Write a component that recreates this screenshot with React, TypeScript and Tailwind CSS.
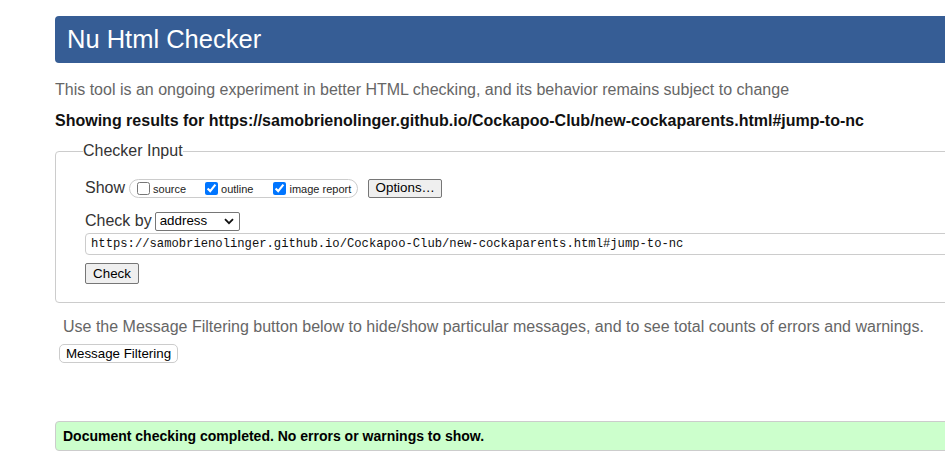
import React from "react";

function Check({ checked }: { checked: boolean }) {
  return (
    <input
      type="checkbox"
      defaultChecked={checked}
      className="m-0 h-[13px] w-[13px] shrink-0 accent-[#0075ff]"
    />
  );
}

export default function App() {
  const url =
    "https://samobrienolinger.github.io/Cockapoo-Club/new-cockaparents.html#jump-to-nc";
  return (
    <div className="h-[465px] w-[945px] overflow-hidden bg-white font-['Liberation_Sans',Arial,sans-serif] text-[#222]">
      <div className="ml-[55px] w-[1000px]">
        <div className="mt-[16px] flex h-[47px] items-center rounded-l-[4px] bg-[#365d95] pb-[1px] pl-[12px] text-[25.5px] text-white">
          Nu Html Checker
        </div>
        <p className="mt-[18px] text-[16px] leading-[18px] text-[#666]">
          This tool is an ongoing experiment in better HTML checking, and its behavior remains subject to change
        </p>
        <p className="mt-[13px] text-[16px] font-bold leading-[18px] text-[#111]">
          Showing results for {url}
        </p>

        <fieldset className="mt-[12px] rounded-[4px] border border-[#ccc] pb-[18px] pl-[29px]">
          <legend className="-ml-[2px] text-[16px] leading-[18px] text-[#333]">Checker Input</legend>
          <div className="mt-[18px] flex h-[20px] items-center">
            <span className="text-[16px] leading-[18px] text-[#333]">Show</span>
            <div className="ml-[4px] flex h-[19px] items-center rounded-full border border-[#ccc] pl-[7px] pr-[6px] text-[11px] text-[#222]">
              <label className="flex items-center">
                <Check checked={false} />
                <span className="ml-[3px] pt-[3px]">source</span>
              </label>
              <label className="ml-[19px] flex items-center">
                <Check checked={true} />
                <span className="ml-[3px] pt-[3px]">outline</span>
              </label>
              <label className="ml-[20px] flex items-center">
                <Check checked={true} />
                <span className="ml-[3px] pt-[3px]">image report</span>
              </label>
            </div>
            <button className="ml-[10px] flex h-[19px] w-[74px] items-center justify-center rounded-[2px] border border-[#767676] bg-[#efefef] text-[13.33px] text-black">
              Options…
            </button>
          </div>

          <div className="mt-[13px] flex h-[20px] items-center">
            <span className="text-[16px] leading-[18px] text-[#333]">Check by</span>
            <div className="ml-[3px] flex h-[19px] w-[85px] items-center justify-between rounded-[2px] border border-[#767676] pl-[4px] pr-[4px] text-[13.33px] text-black">
              <span>address</span>
              <svg width="10" height="7" viewBox="0 0 10 7" className="mr-[1px]">
                <path d="M1 1.2 L5 5.2 L9 1.2" fill="none" stroke="#111" strokeWidth="1.8" />
              </svg>
            </div>
          </div>

          <div className="mt-[2px] flex h-[22px] items-center rounded-[4px] border border-[#ccc] pl-[5px] font-['Liberation_Mono',monospace] text-[12.2px] text-[#111]">
            {url}
          </div>

          <button className="mt-[8px] flex h-[21px] w-[54px] items-center justify-center rounded-[2px] border border-[#767676] bg-[#efefef] text-[13.33px] text-black">
            Check
          </button>
        </fieldset>

        <p className="mt-[15px] pl-[8px] text-[16px] leading-[18px] text-[#666]">
          Use the Message Filtering button below to hide/show particular messages, and to see total counts of errors and warnings.
        </p>
        <button className="ml-[4px] mt-[8px] flex h-[19px] w-[119px] items-center justify-center rounded-[5px] border border-[#ccc] bg-white text-[13.33px] text-black">
          Message Filtering
        </button>

        <div className="mt-[58px] flex h-[30px] items-center rounded-l-[4px] border border-[#ccc] bg-[#ccffcc] pl-[7px] text-[14px] font-bold text-black">
          Document checking completed. No errors or warnings to show.
        </div>
      </div>
    </div>
  );
}
